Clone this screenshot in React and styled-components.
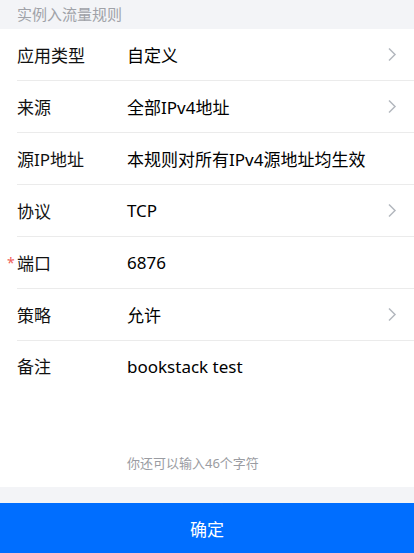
import styled, { createGlobalStyle } from 'styled-components'

const GlobalStyle = createGlobalStyle`
  html, body {
    margin: 0;
    padding: 0;
    background: #f3f4f7;
  }
  body {
    font-family: "Noto Sans", "Noto Sans CJK SC", sans-serif;
  }
`

const Page = styled.div`
  width: 414px;
  display: flex;
  flex-direction: column;
  background: #f3f4f7;
`

const SectionTitle = styled.div`
  height: 29px;
  line-height: 29px;
  padding-left: 17px;
  font-size: 15px;
  color: #a0a2a8;
`

const Form = styled.div`
  background: #ffffff;
  padding-left: 17px;
`

const Row = styled.div`
  position: relative;
  display: flex;
  align-items: center;
  height: 51px;
  border-bottom: 1px solid #ebebeb;
  padding-right: 17px;
`

const Label = styled.div`
  width: 110px;
  flex-shrink: 0;
  font-size: 17px;
  color: #111111;
`

const Required = styled.span`
  position: absolute;
  left: -10px;
  top: 16px;
  font-size: 14px;
  color: #f0605a;
`

const Value = styled.div`
  flex: 1;
  font-size: 17px;
  color: #000000;
  white-space: nowrap;
`

const Chevron = () => (
  <svg width="10" height="15" viewBox="0 0 10 15" fill="none">
    <path d="M2 1.5 L8 7.5 L2 13.5" stroke="#b4b8bf" strokeWidth="1.5" />
  </svg>
)

const RemarkRow = styled.div`
  display: flex;
  padding-right: 17px;
`

const RemarkLabel = styled(Label)`
  height: 52px;
  line-height: 52px;
`

const RemarkBody = styled.div`
  flex: 1;
  display: flex;
  flex-direction: column;
`

const TextArea = styled.textarea`
  height: 113px;
  box-sizing: border-box;
  padding: 14px 0 0;
  margin: 0;
  border: none;
  outline: none;
  resize: none;
  font-family: inherit;
  font-size: 17px;
  line-height: 24px;
  color: #000000;
  background: transparent;
`

const Counter = styled.div`
  height: 18px;
  line-height: 18px;
  font-size: 13px;
  color: #9a9ca2;
  margin-bottom: 15px;
`

const Spacer = styled.div`
  height: 16px;
`

const SubmitButton = styled.button`
  height: 50px;
  border: none;
  outline: none;
  background: #006eff;
  color: #ffffff;
  font-family: inherit;
  font-size: 17px;
  cursor: pointer;
`

const rows = [
  { label: '应用类型', value: '自定义', arrow: true },
  { label: '来源', value: '全部IPv4地址', arrow: true },
  { label: '源IP地址', value: '本规则对所有IPv4源地址均生效' },
  { label: '协议', value: 'TCP', arrow: true },
  { label: '端口', value: '6876', required: true },
  { label: '策略', value: '允许', arrow: true },
]

function App() {
  return (
    <Page>
      <GlobalStyle />
      <SectionTitle>实例入流量规则</SectionTitle>
      <Form>
        {rows.map(row => (
          <Row key={row.label}>
            {row.required && <Required>*</Required>}
            <Label>{row.label}</Label>
            <Value>{row.value}</Value>
            {row.arrow && <Chevron />}
          </Row>
        ))}
        <RemarkRow>
          <RemarkLabel>备注</RemarkLabel>
          <RemarkBody>
            <TextArea defaultValue="bookstack test" />
            <Counter>你还可以输入46个字符</Counter>
          </RemarkBody>
        </RemarkRow>
      </Form>
      <Spacer />
      <SubmitButton>确定</SubmitButton>
    </Page>
  )
}

export default App
